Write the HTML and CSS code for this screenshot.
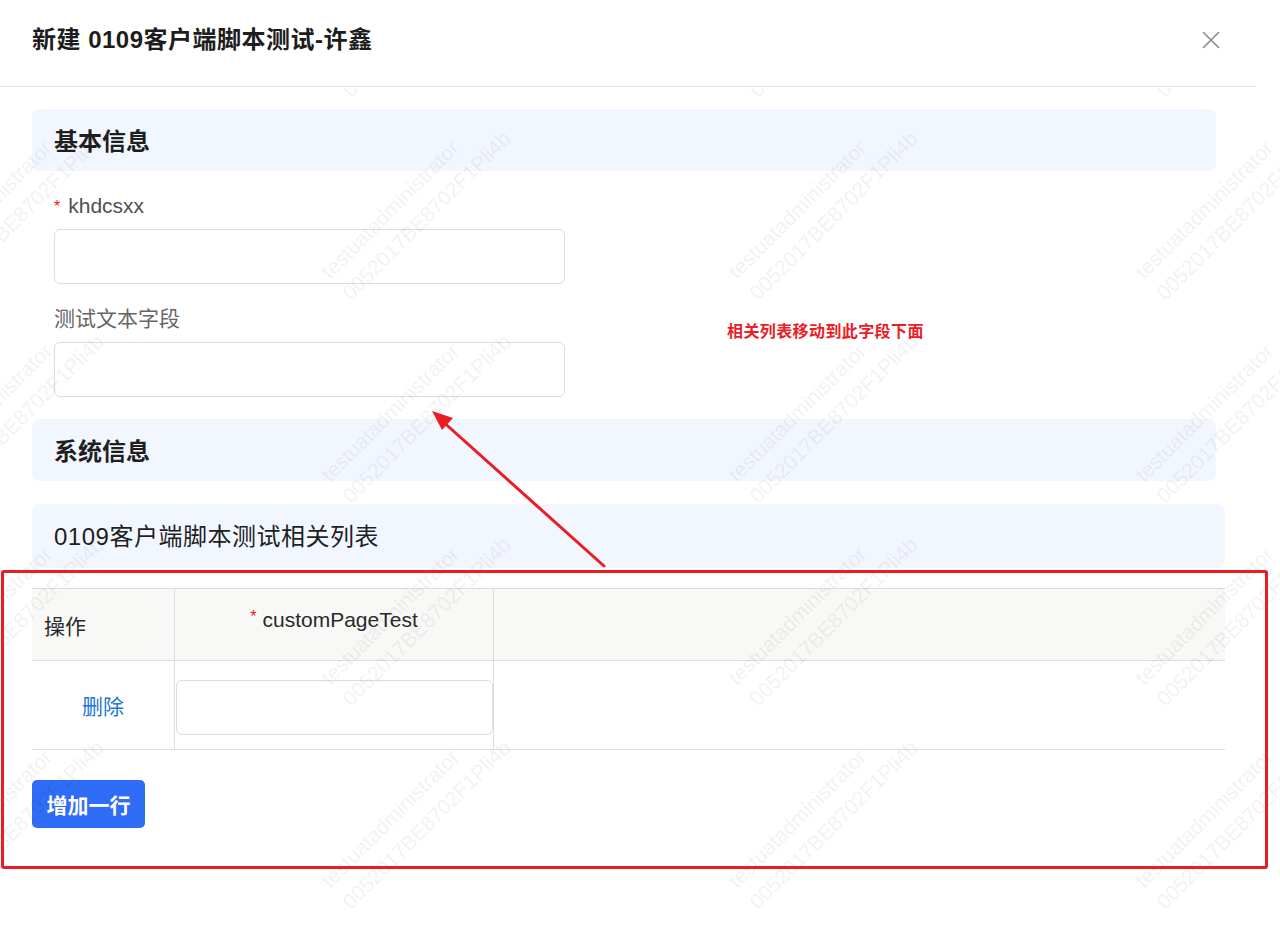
FILE: index.html
```html
<!DOCTYPE html>
<html lang="zh-CN">
<head>
<meta charset="utf-8">
<title>新建 0109客户端脚本测试-许鑫</title>
<link rel="stylesheet" href="styles.css">
</head>
<body>
<div class="page">
  <div class="dialog">
    <header class="dialog-header">
      <h1 class="dialog-title">新建 0109客户端脚本测试-许鑫</h1>
      <button class="close-btn" aria-label="关闭">
        <svg width="18" height="18" viewBox="0 0 18 18"><path d="M1.5 1.5 L16.5 16.5 M16.5 1.5 L1.5 16.5" stroke="#8a8a8a" stroke-width="1.6" fill="none" stroke-linecap="round"/></svg>
      </button>
    </header>
    <main class="dialog-body">
      <div class="section-head narrow bold">基本信息</div>
      <div class="form-item">
        <label class="form-label"><span class="req">*</span>khdcsxx</label>
        <input class="text-input" type="text">
      </div>
      <div class="form-item">
        <label class="form-label cjk">测试文本字段</label>
        <input class="text-input" type="text">
      </div>
      <div class="section-head narrow bold sys">系统信息</div>
      <div class="section-head related">0109客户端脚本测试相关列表</div>
      <div class="sub-table">
        <div class="row head">
          <div class="cell op">操作</div>
          <div class="cell field"><span class="req">*</span>customPageTest</div>
          <div class="cell rest"></div>
        </div>
        <div class="row body-row">
          <div class="cell op"><a class="link">删除</a></div>
          <div class="cell field-input"><input class="cell-input" type="text"></div>
          <div class="cell rest"></div>
        </div>
      </div>
      <button class="btn-primary">增加一行</button>
    </main>
  </div>

  <svg class="watermark" width="1280" height="843" viewBox="0 88 1280 843">
    <defs>
      <pattern id="wm" patternUnits="userSpaceOnUse" x="314" y="105" width="407" height="203">
        <g transform="rotate(-45 16 175)" font-family="Liberation Sans, Arial, sans-serif" font-size="21" fill="#000" fill-opacity="0.05">
          <text x="16" y="175">testuatadministrator</text>
          <text x="16" y="205">0052017BE8702F1Pli4b</text>
        </g>
      </pattern>
    </defs>
    <rect x="0" y="88" width="1280" height="843" fill="url(#wm)"/>
  </svg>

  <div class="annot-box"></div>
  <svg class="annot-arrow" width="1280" height="931" viewBox="0 0 1280 931">
    <line x1="604" y1="566" x2="440" y2="419" stroke="#ec1c24" stroke-width="3" stroke-linecap="round"/>
    <polygon points="432,411 453,418 442,430" fill="#ec1c24"/>
  </svg>
  <div class="annot-text">相关列表移动到此字段下面</div>
</div>
</body>
</html>
```

FILE: styles.css
```css
* { box-sizing: border-box; }

html, body {
  margin: 0;
  padding: 0;
  background: #ffffff;
}

body {
  font-family: "Liberation Sans", "Noto Sans CJK SC", sans-serif;
  color: #222;
}

.page {
  position: relative;
  width: 1280px;
  height: 931px;
  overflow: hidden;
}

.dialog {
  width: 1256px;
}

.dialog-header {
  height: 87px;
  padding: 24px 36px 0 32px;
  display: flex;
  justify-content: space-between;
  align-items: flex-start;
  border-bottom: 1px solid #e2e2e2;
}

.dialog-title {
  margin: 0;
  font-size: 24px;
  line-height: 32px;
  font-weight: 700;
  letter-spacing: 0.5px;
  color: #1d1d1d;
}

.close-btn {
  margin-top: 7px;
  width: 18px;
  height: 18px;
  padding: 0;
  border: 0;
  background: transparent;
  display: flex;
}

.dialog-body {
  padding: 22px 31px 0 32px;
  display: flex;
  flex-direction: column;
  align-items: flex-start;
}

.section-head {
  width: 100%;
  height: 62px;
  padding-left: 22px;
  display: flex;
  align-items: center;
  background: #f2f6fe;
  border-radius: 8px;
  font-size: 24px;
  color: #1f1f1f;
}

.section-head.narrow { width: 1184px; }
.section-head.bold { font-weight: 700; padding-bottom: 2px; }
.section-head.sys { margin-top: 22px; }
.section-head.related {
  margin-top: 23px;
  height: 64px;
  font-weight: 400;
  letter-spacing: 0.5px;
  padding-bottom: 4px;
}

.form-item {
  margin-top: 20px;
  padding-left: 22px;
  display: flex;
  flex-direction: column;
}

.form-label {
  font-size: 21px;
  line-height: 30px;
  color: #505050;
  margin-bottom: 8px;
  display: flex;
  align-items: flex-start;
}

.form-label.cjk { color: #666; }

.req {
  color: #f0141e;
  font-size: 16px;
  line-height: 20px;
  margin-right: 8px;
  position: relative;
  top: 6px;
}

.text-input {
  width: 511px;
  height: 55px;
  border: 1px solid #dcdcdc;
  border-radius: 6px;
  background: #fff;
  outline: none;
}

.sub-table {
  width: 100%;
  margin-top: 20px;
}

.row {
  display: grid;
  grid-template-columns: 143px 319px 1fr;
  border-bottom: 1px solid #dedede;
}

.row.head {
  height: 73px;
  border-top: 1px solid #dedede;
  background: #f8f8f7;
}

.row.body-row { height: 89px; }

.cell {
  border-right: 1px solid #dedede;
  display: flex;
  align-items: center;
  font-size: 21px;
  color: #2a2a2a;
}

.cell.rest { border-right: 0; }

.head .cell.op { padding-left: 12px; }

.head .cell.field {
  justify-content: center;
  padding-bottom: 10px;
}

.head .cell.field .req { margin-right: 6px; top: -3px; }

.body-row .cell.op { justify-content: center; }

.link {
  color: #2176d2;
  cursor: pointer;
}

.cell.field-input {
  align-items: flex-start;
  padding: 19px 0 0 1px;
}

.cell-input {
  width: 317px;
  height: 55px;
  border: 1px solid #dcdcdc;
  border-radius: 6px;
  background: #fff;
  outline: none;
}

.btn-primary {
  margin-top: 30px;
  width: 113px;
  height: 48px;
  border: 0;
  border-radius: 5px;
  background: #2f6df6;
  color: #fff;
  font-family: "Liberation Sans", "Noto Sans CJK SC", sans-serif;
  font-size: 21px;
  font-weight: 700;
}

.watermark {
  position: absolute;
  left: 0;
  top: 88px;
  pointer-events: none;
}

.annot-box {
  position: absolute;
  left: 1px;
  top: 570px;
  width: 1267px;
  height: 299px;
  border: 3px solid #ec1c24;
  border-radius: 3px;
  pointer-events: none;
}

.annot-arrow {
  position: absolute;
  left: 0;
  top: 0;
  pointer-events: none;
}

.annot-text {
  position: absolute;
  left: 727px;
  top: 321px;
  font-size: 16px;
  line-height: 22px;
  font-weight: 700;
  letter-spacing: 0.4px;
  color: #ec1c24;
  white-space: nowrap;
}
```
